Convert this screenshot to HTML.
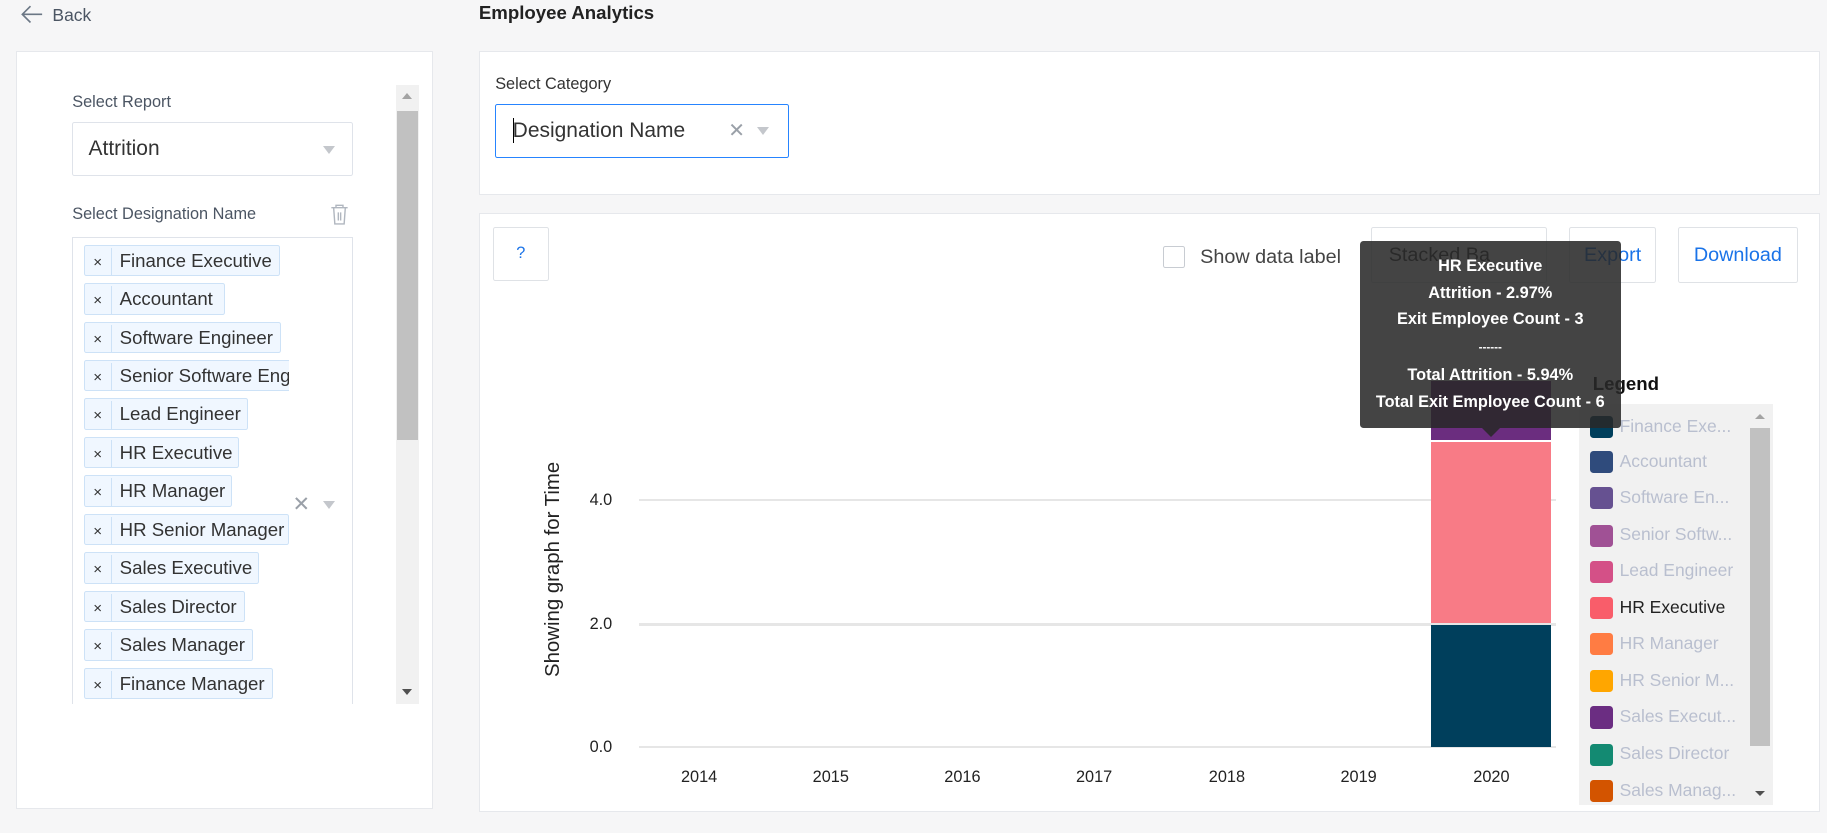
<!DOCTYPE html>
<html><head><meta charset="utf-8"><style>
html,body{margin:0;padding:0;}
body{width:1568px;height:715px;zoom:1.16518;background:#f6f6f7;font-family:"Liberation Sans",sans-serif;position:relative;overflow:hidden;}
.a{position:absolute;}
.panel{position:absolute;background:#fff;border:1px solid #e6e8ec;box-sizing:border-box;}
.lbl{color:#4b5563;font-size:14px;}
.tag{position:absolute;left:72px;height:27px;background:#f0f7ff;border:1px solid #cde2f7;box-sizing:border-box;border-radius:2px;font-size:16px;color:#333;line-height:25px;white-space:nowrap;overflow:hidden;}
.tag .x{display:inline-block;width:22px;text-align:center;font-size:13px;color:#333;border-right:1px solid #cde2f7;margin-right:7px;}
.tri{width:0;height:0;border-left:6px solid transparent;border-right:6px solid transparent;border-top:7px solid #c4c7cc;position:absolute;}
.btn{position:absolute;background:#fff;border:1px solid #dfe2e6;box-sizing:border-box;border-radius:2px;font-size:17px;text-align:center;}
.ylab{position:absolute;font-size:14px;color:#222;}
.xlab{position:absolute;font-size:14px;color:#222;top:659px;width:60px;text-align:center;}
.grid{position:absolute;left:548px;width:787px;height:2px;background:#e6e6e6;}
.li{position:absolute;left:1365px;font-size:15px;color:#b9bfcf;white-space:nowrap;}
.li i{display:inline-block;width:19px;height:19px;border-radius:3px;vertical-align:middle;margin-right:6px;}
</style></head><body>
<svg class="a" style="left:17px;top:4px" width="20" height="16" viewBox="0 0 20 16"><path d="M9 1 L2 8 L9 15 M2 8 H19" stroke="#6b7785" stroke-width="1.4" fill="none"/></svg>
<div class="a" style="left:45px;top:4px;font-size:15px;color:#4b5563">Back</div>
<div class="a" style="left:411px;top:2px;font-size:16px;font-weight:bold;color:#222">Employee Analytics</div>

<div class="panel" style="left:14px;top:44px;width:358px;height:650px"></div>
<div class="a" style="left:340px;top:73px;width:20px;height:531px;background:#f1f1f1"></div>
<div class="a" style="left:341px;top:95px;width:18px;height:283px;background:#c1c1c1"></div>
<div class="a" style="left:345px;top:80px;border-left:5px solid transparent;border-right:5px solid transparent;border-bottom:6px solid #a3a3a3"></div>
<div class="a" style="left:345px;top:591px;border-left:5px solid transparent;border-right:5px solid transparent;border-top:6px solid #505050"></div>
<div class="a lbl" style="left:62px;top:80px">Select Report</div>
<div class="a" style="left:62px;top:105px;width:241px;height:46px;border:1px solid #dfe3ea;box-sizing:border-box;border-radius:2px"></div>
<div class="a" style="left:76px;top:118px;font-size:18px;color:#333">Attrition</div>
<div class="tri" style="left:277px;top:125px"></div>
<div class="a lbl" style="left:62px;top:176px">Select Designation Name</div>
<svg class="a" style="left:282px;top:174px" width="18" height="20" viewBox="0 0 18 20"><path d="M2 4 H16 M6 4 V2 H12 V4 M4 4 L5 18 H13 L14 4 M8 8 V15 M10 8 V15" stroke="#b0b6bf" stroke-width="1.2" fill="none"/></svg>
<div class="a" style="left:62px;top:203px;width:241px;height:420px;border:1px solid #dfe3ea;box-sizing:border-box;border-bottom:none"></div>
<div class="a" style="left:62px;top:604px;width:300px;height:20px;background:#fff"></div>
<div class="a" style="left:62px;top:203px;width:186px;height:401px;overflow:hidden">
<div style="position:relative;left:-62px;top:-203px">
<div class="tag" style="top:210px;width:168px"><span class="x">×</span>Finance Executive</div>
<div class="tag" style="top:243px;width:121px"><span class="x">×</span>Accountant</div>
<div class="tag" style="top:276px;width:169px"><span class="x">×</span>Software Engineer</div>
<div class="tag" style="top:309px;width:190px"><span class="x">×</span>Senior Software Engineer</div>
<div class="tag" style="top:342px;width:141px"><span class="x">×</span>Lead Engineer</div>
<div class="tag" style="top:375px;width:133px"><span class="x">×</span>HR Executive</div>
<div class="tag" style="top:408px;width:127px"><span class="x">×</span>HR Manager</div>
<div class="tag" style="top:441px;width:176px"><span class="x">×</span>HR Senior Manager</div>
<div class="tag" style="top:474px;width:150px"><span class="x">×</span>Sales Executive</div>
<div class="tag" style="top:507px;width:138px"><span class="x">×</span>Sales Director</div>
<div class="tag" style="top:540px;width:145px"><span class="x">×</span>Sales Manager</div>
<div class="tag" style="top:573px;width:162px"><span class="x">×</span>Finance Manager</div>
</div></div>
<div class="a" style="left:251px;top:422px;font-size:18px;color:#9aa0a8">✕</div>
<div class="tri" style="left:277px;top:430px"></div>

<div class="panel" style="left:411px;top:44px;width:1151px;height:123px"></div>
<div class="a lbl" style="left:425px;top:64px;color:#333">Select Category</div>
<div class="a" style="left:425px;top:89px;width:252px;height:47px;border:1px solid #2684ff;box-sizing:border-box;border-radius:2px"></div>
<div class="a" style="left:440px;top:102px;font-size:18px;color:#333">Designation Name</div>
<div class="a" style="left:440px;top:101px;width:1px;height:22px;background:#000"></div>
<div class="a" style="left:625px;top:102px;font-size:17px;color:#9aa0a8">✕</div>
<div class="tri" style="left:650px;top:109px"></div>

<div class="panel" style="left:411px;top:183px;width:1151px;height:514px"></div>
<div class="btn" style="left:423px;top:195px;width:48px;height:46px;line-height:44px;font-size:14px;color:#1a73e8">?</div>
<div class="a" style="left:998px;top:211px;width:19px;height:19px;border:1.5px solid #c8ccd2;box-sizing:border-box;border-radius:2px"></div>
<div class="a" style="left:1030px;top:211px;font-size:17px;color:#444">Show data label</div>
<div class="btn" style="left:1177px;top:195px;width:151px;height:48px;line-height:48px;text-align:left;padding-left:14px;color:#333">Stacked Ba</div>
<div class="btn" style="left:1347px;top:195px;width:74px;height:48px;line-height:48px;color:#1a73e8">Export</div>
<div class="btn" style="left:1440px;top:195px;width:103px;height:48px;line-height:48px;color:#1a73e8">Download</div>

<div class="a" style="left:465px;top:581px;font-size:17.5px;color:#222;transform:rotate(-90deg);transform-origin:0 0;white-space:nowrap">Showing graph for Time</div>
<div class="grid" style="top:428px"></div>
<div class="grid" style="top:535px"></div>
<div class="grid" style="top:640px"></div>
<div class="ylab" style="left:506px;top:421px">4.0</div>
<div class="ylab" style="left:506px;top:528px">2.0</div>
<div class="ylab" style="left:506px;top:633px">0.0</div>
<div class="xlab" style="left:570px">2014</div>
<div class="xlab" style="left:683px">2015</div>
<div class="xlab" style="left:796px">2016</div>
<div class="xlab" style="left:909px">2017</div>
<div class="xlab" style="left:1023px">2018</div>
<div class="xlab" style="left:1136px">2019</div>
<div class="xlab" style="left:1250px">2020</div>
<div class="a" style="left:1228px;top:327px;width:103px;height:51px;background:#6b2d7f"></div>
<div class="a" style="left:1228px;top:379px;width:103px;height:156px;background:#f87b86"></div>
<div class="a" style="left:1228px;top:536px;width:103px;height:105px;background:#003f5c"></div>

<div class="a" style="left:1367px;top:320px;font-size:16px;font-weight:bold;color:#111">Legend</div>
<div class="a" style="left:1355px;top:347px;width:167px;height:344px;background:#f1f1f1"></div>
<div class="a" style="left:1502px;top:367px;width:17px;height:273px;background:#c1c1c1"></div>
<div class="a" style="left:1506px;top:355px;border-left:5px solid transparent;border-right:5px solid transparent;border-bottom:5px solid #a3a3a3"></div>
<div class="a" style="left:1506px;top:679px;border-left:5px solid transparent;border-right:5px solid transparent;border-top:5px solid #505050"></div>
<div class="li" style="top:357px"><i style="background:#003f5c"></i>Finance Exe...</div>
<div class="li" style="top:387px"><i style="background:#2f4b7c"></i>Accountant</div>
<div class="li" style="top:418px"><i style="background:#665191"></i>Software En...</div>
<div class="li" style="top:450px"><i style="background:#a05195"></i>Senior Softw...</div>
<div class="li" style="top:481px"><i style="background:#d45087"></i>Lead Engineer</div>
<div class="li" style="top:512px;color:#222"><i style="background:#f95d6a"></i>HR Executive</div>
<div class="li" style="top:543px"><i style="background:#ff7c43"></i>HR Manager</div>
<div class="li" style="top:575px"><i style="background:#ffa600"></i>HR Senior M...</div>
<div class="li" style="top:606px"><i style="background:#6b2d82"></i>Sales Execut...</div>
<div class="li" style="top:638px"><i style="background:#138a72"></i>Sales Director</div>
<div class="li" style="top:669px"><i style="background:#d35400"></i>Sales Manag...</div>

<div class="a" style="left:1167px;top:207px;width:224px;height:160px;background:rgba(40,40,40,0.87);border-radius:3px;color:#fff;font-size:14px;font-weight:bold;text-align:center;line-height:23px;padding-top:10px;box-sizing:border-box">HR Executive<br>Attrition - 2.97%<br>Exit Employee Count - 3<br><span style="font-size:10px">------</span><br>Total Attrition - 5.94%<br>Total Exit Employee Count - 6</div>
<div class="a" style="left:1272px;top:367px;border-left:8px solid transparent;border-right:8px solid transparent;border-top:8px solid rgba(40,40,40,0.87)"></div>
</body></html>
